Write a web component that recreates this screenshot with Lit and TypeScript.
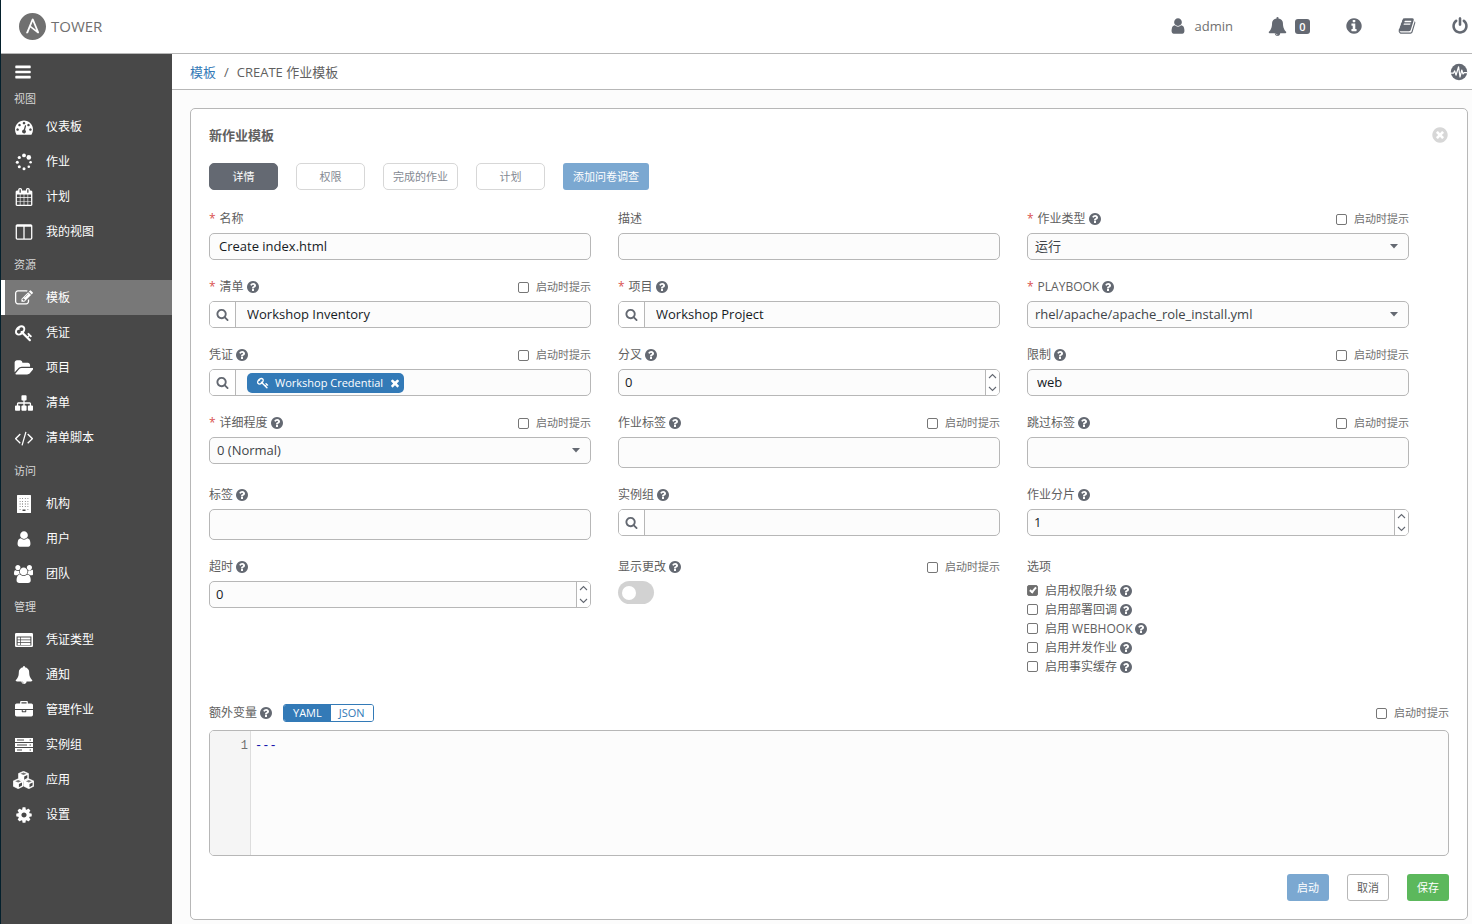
import { LitElement, html, css, svg, nothing, TemplateResult } from "lit";
import { customElement, state } from "lit/decorators.js";

const DISC =
  "q0 209-103 385.5t-279.5 279.5-385.5 103-385.5-103-279.5-279.5-103-385.5 103-385.5 279.5-279.5 385.5-103 385.5 103 279.5 279.5 103 385.5z";

/* Single-path glyphs: [view box width, path data]; the view box is 1792 high. */
const GLYPHS: Record<string, [number, string]> = {
  bars: [1792, "M1664 1344v128q0 26-19 45t-45 19h-1408q-26 0-45-19t-19-45v-128q0-26 19-45t45-19h1408q26 0 45 19t19 45zm0-512v128q0 26-19 45t-45 19h-1408q-26 0-45-19t-19-45v-128q0-26 19-45t45-19h1408q26 0 45 19t19 45zm0-512v128q0 26-19 45t-45 19h-1408q-26 0-45-19t-19-45v-128q0-26 19-45t45-19h1408q26 0 45 19t19 45z"],
  dashboard: [1792, "M384 1152q0-53-37.5-90.5t-90.5-37.5-90.5 37.5-37.5 90.5 37.5 90.5 90.5 37.5 90.5-37.5 37.5-90.5zm192-448q0-53-37.5-90.5t-90.5-37.5-90.5 37.5-37.5 90.5 37.5 90.5 90.5 37.5 90.5-37.5 37.5-90.5zm428 481l101-382q6-26-7.5-48.5t-38.5-29.5-48 6.5-30 39.5l-101 382q-60 5-107 43.5t-63 98.5q-20 77 20 146t117 89 146-20 89-117q16-60-6-117t-72-91zm660-33q0-53-37.5-90.5t-90.5-37.5-90.5 37.5-37.5 90.5 37.5 90.5 90.5 37.5 90.5-37.5 37.5-90.5zm-640-640q0-53-37.5-90.5t-90.5-37.5-90.5 37.5-37.5 90.5 37.5 90.5 90.5 37.5 90.5-37.5 37.5-90.5zm448 192q0-53-37.5-90.5t-90.5-37.5-90.5 37.5-37.5 90.5 37.5 90.5 90.5 37.5 90.5-37.5 37.5-90.5zm320 448q0 261-141 483-19 29-54 29h-1402q-35 0-54-29-141-221-141-483 0-182 71-348t191-286 286-191 348-71 348 71 286 191 191 286 71 348z"],
  calendar: [1792, "M192 1664h288v-288h-288v288zm352 0h320v-288h-320v288zm-352-352h288v-320h-288v320zm352 0h320v-320h-320v320zm-352-384h288v-288h-288v288zm736 736h320v-288h-320v288zm-384-736h320v-288h-320v288zm768 736h288v-288h-288v288zm-384-352h320v-320h-320v320zm-352-864v-288q0-13-9.5-22.5t-22.5-9.5h-64q-13 0-22.5 9.5t-9.5 22.5v288q0 13 9.5 22.5t22.5 9.5h64q13 0 22.5-9.5t9.5-22.5zm736 864h288v-320h-288v320zm-384-384h320v-288h-320v288zm384 0h288v-288h-288v288zm32-480v-288q0-13-9.5-22.5t-22.5-9.5h-64q-13 0-22.5 9.5t-9.5 22.5v288q0 13 9.5 22.5t22.5 9.5h64q13 0 22.5-9.5t9.5-22.5zm384-64v1280q0 52-38 90t-90 38h-1408q-52 0-90-38t-38-90v-1280q0-52 38-90t90-38h128v-96q0-66 47-113t113-47h64q66 0 113 47t47 113v96h384v-96q0-66 47-113t113-47h64q66 0 113 47t47 113v96h128q52 0 90 38t38 90z"],
  columns: [1792, "M224 1536h608v-1152h-640v1120q0 13 9.5 22.5t22.5 9.5zm1376-32v-1120h-640v1152h608q13 0 22.5-9.5t9.5-22.5zm128-1216v1216q0 66-47 113t-113 47h-1344q-66 0-113-47t-47-113v-1216q0-66 47-113t113-47h1344q66 0 113 47t47 113z"],
  edit: [1792, "M888 1184l116-116-152-152-116 116v56h96v96h56zm440-720q-16-16-33 1l-350 350q-17 17-1 33t33-1l350-350q17-17 1-33zm80 594v190q0 119-84.5 203.5t-203.5 84.5h-832q-119 0-203.5-84.5t-84.5-203.5v-832q0-119 84.5-203.5t203.5-84.5h832q63 0 117 25 15 7 18 23 3 17-9 29l-49 49q-14 14-32 8-23-6-45-6h-832q-66 0-113 47t-47 113v832q0 66 47 113t113 47h832q66 0 113-47t47-113v-126q0-13 9-22l64-64q15-15 35-7t20 29zm-96-738l288 288-672 672h-288v-288zm444 132l-92 92-288-288 92-92q28-28 68-28t68 28l152 152q28 28 28 68t-28 68z"],
  key: [1792, "M832 512q0-80-56-136t-136-56-136 56-56 136q0 42 19 83-41-19-83-19-80 0-136 56t-56 136 56 136 136 56 136-56 56-136q0-42-19-83 41 19 83 19 80 0 136-56t56-136zm851 704q0 17-49 66t-66 49q-9 0-28.5-16t-36.5-33-38.5-40-24.5-26l-96 96 220 220q28 28 28 68 0 42-39 81t-81 39q-40 0-68-28l-671-671q-176 131-365 131-163 0-265.5-102.5t-102.5-265.5q0-160 95-313t248-248 313-95q163 0 265.5 102.5t102.5 265.5q0 189-131 365l355 355 96-96q-3-3-26-24.5t-40-38.5-33-36.5-16-28.5q0-17 49-66t66-49q13 0 23 10 6 6 46 44.5t82 79.5 86.5 86 73 78 28.5 41z"],
  folder: [1943, "M1943 952q0 31-31 66l-336 396q-43 51-120.5 86.5t-143.5 35.5h-1088q-34 0-60.5-13t-26.5-43q0-31 31-66l336-396q43-51 120.5-86.5t143.5-35.5h1088q34 0 60.5 13t26.5 43zm-343-344v160h-832q-94 0-197 47.5t-164 119.5l-337 396-5 6q0-4-.5-12.5t-.5-12.5v-960q0-92 66-158t158-66h320q92 0 158 66t66 158v32h544q92 0 158 66t66 158z"],
  sitemap: [1792, "M1792 1248v320q0 40-28 68t-68 28h-320q-40 0-68-28t-28-68v-320q0-40 28-68t68-28h96v-192h-512v192h96q40 0 68 28t28 68v320q0 40-28 68t-68 28h-320q-40 0-68-28t-28-68v-320q0-40 28-68t68-28h96v-192h-512v192h96q40 0 68 28t28 68v320q0 40-28 68t-68 28h-320q-40 0-68-28t-28-68v-320q0-40 28-68t68-28h96v-192q0-52 38-90t90-38h512v-192h-96q-40 0-68-28t-28-68v-320q0-40 28-68t68-28h320q40 0 68 28t28 68v320q0 40-28 68t-68 28h-96v192h512q52 0 90 38t38 90v192h96q40 0 68 28t28 68z"],
  code: [1792, "M553 1399l-50 50q-10 10-23 10t-23-10l-466-466q-10-10-10-23t10-23l466-466q10-10 23-10t23 10l50 50q10 10 10 23t-10 23l-393 393 393 393q10 10 10 23t-10 23zm591-1067l-373 1291q-4 13-15.5 19.5t-23.5 2.5l-62-17q-13-4-19.5-15.5t-2.5-24.5l373-1291q4-13 15.5-19.5t23.5-2.5l62 17q13 4 19.5 15.5t2.5 24.5zm657 651l-466 466q-10 10-23 10t-23-10l-50-50q-10-10-10-23t10-23l393-393-393-393q-10-10-10-23t10-23l50-50q10-10 23-10t23 10l466 466q10 10 10 23t-10 23z"],
  user: [1792, "M1536 1399q0 109-62.5 187t-150.5 78h-854q-88 0-150.5-78t-62.5-187q0-85 8.5-160.5t31.5-152 58.5-131 94-89 134.5-34.5q131 128 313 128t313-128q76 0 134.5 34.5t94 89 58.5 131 31.5 152 8.5 160.5zm-256-887q0 159-112.5 271.5t-271.5 112.5-271.5-112.5-112.5-271.5 112.5-271.5 271.5-112.5 271.5 112.5 112.5 271.5z"],
  users: [1920, "M593 896q-162 5-265 128h-134q-82 0-138-40.5t-56-118.5q0-353 124-353 6 0 43.5 21t97.5 42.5 119 21.5q67 0 133-23-5 37-5 66 0 159 93 294zm1071 637q0 120-73 189.5t-194 69.5h-874q-121 0-194-69.5t-73-189.5q0-53 3.5-103.5t14-109 26.5-108.5 43-97.5 62-81 85.5-53.5 111.5-20q10 0 43 21.5t73 48 107 48 135 21.5 135-21.5 107-48 73-48 43-21.5q61 0 111.5 20t85.5 53.5 62 81 43 97.5 26.5 108.5 14 109 3.5 103.5zm-1024-1277q0 106-75 181t-181 75-181-75-75-181 75-181 181-75 181 75 75 181zm704 384q0 159-112.5 271.5t-271.5 112.5-271.5-112.5-112.5-271.5 112.5-271.5 271.5-112.5 271.5 112.5 112.5 271.5zm576 225q0 78-56 118.5t-138 40.5h-134q-103-123-265-128 93-135 93-294 0-29-5-66 66 23 133 23 59 0 119-21.5t97.5-42.5 43.5-21q124 0 124 353zm-128-609q0 106-75 181t-181 75-181-75-75-181 75-181 181-75 181 75 75 181z"],
  bell: [1792, "M912 1696q0-16-16-16-59 0-101.5-42.5t-42.5-101.5q0-16-16-16t-16 16q0 73 51.5 124.5t124.5 51.5q16 0 16-16zm816-288q0 52-38 90t-90 38h-448q0 106-75 181t-181 75-181-75-75-181h-448q-52 0-90-38t-38-90q50-42 91-88t85-119.5 74.5-158.5 50-206 19.5-260q0-152 117-282.5t307-158.5q-8-19-8-39 0-40 28-68t68-28 68 28 28 68q0 20-8 39 190 28 307 158.5t117 282.5q0 139 19.5 260t50 206 74.5 158.5 85 119.5 91 88z"],
  briefcase: [1792, "M640 256h512v-128h-512v128zm1152 640v480q0 66-47 113t-113 47h-1472q-66 0-113-47t-47-113v-480h672v160q0 26 19 45t45 19h320q26 0 45-19t19-45v-160h672zm-768 0v128h-256v-128h256zm768-480v384h-1792v-384q0-66 47-113t113-47h352v-160q0-40 28-68t68-28h576q40 0 68 28t28 68v160h352q66 0 113 47t47 113z"],
  cog: [1792, "M1152 896q0-106-75-181t-181-75-181 75-75 181 75 181 181 75 181-75 75-181zm512-109v222q0 12-8 23t-20 13l-185 28q-19 54-39 91 35 50 107 138 10 12 10 25t-9 23q-27 37-99 108t-94 71q-12 0-26-9l-138-108q-44 23-91 38-16 136-29 186-7 28-36 28h-222q-14 0-24.5-8.5t-11.5-21.5l-28-184q-49-16-90-37l-141 107q-10 9-25 9-14 0-25-11-126-114-165-168-7-10-7-23 0-12 8-23 15-21 51-66.5t54-70.5q-27-50-41-99l-183-27q-13-2-21-12.5t-8-23.5v-222q0-12 8-23t19-13l186-28q14-46 39-92-40-57-107-138-10-12-10-24 0-10 9-23 26-36 98.5-107.5t94.5-71.5q13 0 26 10l138 107q44-23 91-38 16-136 29-186 7-28 36-28h222q14 0 24.5 8.5t11.5 21.5l28 184q49 16 90 37l142-107q9-9 24-9 13 0 25 10 129 119 165 170 7 8 7 22 0 12-8 23-15 21-51 66.5t-54 70.5q26 50 41 98l183 28q13 2 21 12.5t8 23.5z"],
  info: [1792, "M1152 1376v-160q0-14-9-23t-23-9h-96v-512q0-14-9-23t-23-9h-320q-14 0-23 9t-9 23v160q0 14 9 23t23 9h96v320h-96q-14 0-23 9t-9 23v160q0 14 9 23t23 9h448q14 0 23-9t9-23zm-128-896v-160q0-14-9-23t-23-9h-192q-14 0-23 9t-9 23v160q0 14 9 23t23 9h192q14 0 23-9t9-23zm640 416" + DISC],
  question: [1792, "M1024 1376v-192q0-14-9-23t-23-9h-192q-14 0-23 9t-9 23v192q0 14 9 23t23 9h192q14 0 23-9t9-23zm256-672q0-88-55.5-163t-138.5-116-170-41q-243 0-371 213-15 24 8 42l132 100q7 6 19 6 16 0 25-12 53-68 86-92 34-24 86-24 48 0 85.5 26t37.5 59q0 38-20 61t-68 45q-63 28-115.5 86.5t-52.5 125.5v36q0 14 9 23t23 9h192q14 0 23-9t9-23q0-19 21.5-49.5t54.5-49.5q32-18 49-28.5t46-35 44.5-48 28-60.5 12.5-81zm384 192" + DISC],
  closeDisc: [1792, "M1277 1122q0-26-19-45l-181-181 181-181q19-19 19-45 0-27-19-46l-90-90q-19-18-46-18-26 0-45 18l-181 181-181-181q-19-18-45-18-27 0-46 18l-90 90q-19 19-19 46 0 26 19 45l181 181-181 181q-19 19-19 45 0 27 19 46l90 90q19 18 46 18 26 0 45-18l181-181 181 181q19 18 45 18 27 0 46-18l90-90q19-19 19-46zm387-226" + DISC],
  times: [1792, "M1490 1322q0 40-28 68l-136 136q-28 28-68 28t-68-28l-294-294-294 294q-28 28-68 28t-68-28l-136-136q-28-28-28-68t28-68l294-294-294-294q-28-28-28-68t28-68l136-136q28-28 68-28t68 28l294 294 294-294q28-28 68-28t68 28l136 136q28 28 28 68t-28 68l-294 294 294 294q28 28 28 68z"],
  book: [1792, "M1703 478q40 57 18 129l-275 906q-19 64-76.5 107.5t-122.5 43.5h-923q-77 0-148.5-53.5t-99.5-131.5q-24-67-2-127 0-4 3-27t4-37q1-8-3-21.5t-3-19.5q2-11 8-21t16.5-23.5 16.5-23.5q23-38 45-91.5t30-91.5q3-10 .5-30t-.5-28q3-11 17-28t17-23q21-36 42-92t25-90q1-9-2.5-32t.5-28q4-13 22-30.5t22-22.5q19-26 42.5-84.5t27.5-96.5q1-8-3-25.5t-2-26.5q2-8 9-18t18-23 17-21q8-12 16.5-30.5t15-35 16-36 19.5-32 26.5-23.5 36-11.5 47.5 5.5l-1 3q38-9 51-9h761q74 0 114 56t18 130l-274 906q-36 119-71.5 153.5t-128.5 34.5h-869q-27 0-38 15-11 16-1 43 24 70 144 70h923q29 0 56-15.5t35-41.5l300-987q7-22 5-57 38 15 59 43zm-1064 2q-4 13 2 22.5t20 9.5h608q13 0 25.5-9.5t16.5-22.5l21-64q4-13-2-22.5t-20-9.5h-608q-13 0-25.5 9.5t-16.5 22.5zm-83 256q-4 13 2 22.5t20 9.5h608q13 0 25.5-9.5t16.5-22.5l21-64q4-13-2-22.5t-20-9.5h-608q-13 0-25.5 9.5t-16.5 22.5z"],
  power: [1792, "M1664 896q0 156-61 298t-164 245-245 164-298 61-298-61-245-164-164-245-61-298q0-182 80.5-343t226.5-270q43-32 95.5-25t83.5 50q32 42 24.5 94.5t-49.5 84.5q-98 74-151.5 181t-53.5 228q0 104 40.5 198.5t109.5 163.5 163.5 109.5 198.5 40.5 198.5-40.5 163.5-109.5 109.5-163.5 40.5-198.5q0-121-53.5-228t-151.5-181q-42-32-49.5-84.5t24.5-94.5q31-43 84-50t95 25q146 109 226.5 270t80.5 343zm-640-768v640q0 52-38 90t-90 38-90-38-38-90v-640q0-52 38-90t90-38 90 38 38 90z"],
  search: [1792, "M1216 832q0-185-131.5-316.5t-316.5-131.5-316.5 131.5-131.5 316.5 131.5 316.5 316.5 131.5 316.5-131.5 131.5-316.5zm512 832q0 52-38 90t-90 38q-54 0-90-38l-343-342q-179 124-399 124-143 0-273.5-55.5t-225-150-150-225-55.5-273.5 55.5-273.5 150-225 225-150 273.5-55.5 273.5 55.5 225 150 150 225 55.5 273.5q0 220-124 399l343 343q37 37 37 90z"],
};

const cube = (x: number, y: number) => svg`
  <g transform="translate(${x} ${y})">
    <path d="M5.2 0 10.2 2.2V7.4L5.2 9.9 .2 7.4V2.2z" fill="currentColor" stroke="currentColor" stroke-width="0.6" stroke-linejoin="round"/>
    <path d="M5.2 1.2 8.2 2.5 5.2 3.8 2.2 2.5z" fill="#484848" opacity="0.75"/>
    <path d="M5.9 5.2 9 3.8V6.8L5.9 8.4z" fill="#484848"/>
  </g>`;

/* Glyphs built from several shapes: [width, height, content]. */
const DRAWN: Record<string, [number, number, TemplateResult]> = {
  spinner: [18, 18, svg`
    <circle cx="9" cy="2.4" r="1.9"/><circle cx="13.8" cy="4.4" r="2.3"/>
    <circle cx="15.6" cy="9.2" r="1.3"/><circle cx="13.8" cy="13.8" r="1.3"/>
    <circle cx="9" cy="15.8" r="1.5"/><circle cx="4.3" cy="13.8" r="1.5"/>
    <circle cx="2.3" cy="9.2" r="1.5"/><circle cx="4.3" cy="4.5" r="1.6"/>`],
  building: [18, 18, svg`
    <path fill-rule="evenodd" d="M2.6 0h12.8q.6 0 .6.6v16.8q0 .6-.6.6H2.6q-.6 0-.6-.6V.6q0-.6.6-.6z
      M7.5 14.4h3V16h-3z
      M4.7 3.2h.8v.8h-.8z M7.2 3.2h.8v.8h-.8z M9.9 3.2h.8v.8h-.8z M12.5 3.2h.8v.8h-.8z
      M4.7 5.9h.8v.8h-.8z M7.2 5.9h.8v.8h-.8z M9.9 5.9h.8v.8h-.8z M12.5 5.9h.8v.8h-.8z
      M4.7 8.6h.8v.8h-.8z M7.2 8.6h.8v.8h-.8z M9.9 8.6h.8v.8h-.8z M12.5 8.6h.8v.8h-.8z
      M4.7 11.3h.8v.8h-.8z M7.2 11.3h.8v.8h-.8z M9.9 11.3h.8v.8h-.8z M12.5 11.3h.8v.8h-.8z
      M4.7 14h.8v.8h-.8z M12.5 14h.8v.8h-.8z"/>`],
  listAlt: [18, 18, svg`
    <path fill-rule="evenodd" d="M1.2 2h15.6q1.2 0 1.2 1.2v11.6q0 1.2-1.2 1.2H1.2Q0 16 0 14.8V3.2Q0 2 1.2 2z
      M1.6 5.6v9h14.8v-9z"/>
    <path d="M2.6 6.5h2.4v2H2.6zM5.7 6.5h9.7v2H5.7zM2.6 9.2h2.4v2H2.6zM5.7 9.2h9.7v2H5.7zM2.6 11.9h2.4v2H2.6zM5.7 11.9h9.7v2H5.7z"/>`],
  server: [18, 18, svg`
    <path fill-rule="evenodd" d="M0 2h18v4H0z M2 3.6v.9h7v-.9z M14.6 3.4v1.2h1.4V3.4z
      M0 7h18v4H0z M2 8.6v.9h10v-.9z M14.6 8.4v1.2h1.4V8.4z
      M0 12h18v4H0z M2 13.6v.9h5v-.9z M14.6 13.4v1.2h1.4v-1.2z"/>`],
  cubes: [21, 18, svg`${cube(5.3, 0.3)}${cube(0, 7.8)}${cube(10.6, 7.8)}`],
  activity: [18, 18, svg`
    <circle cx="9" cy="9" r="8.2"/>
    <path d="M0.8 10.2H3.4L4.7 7.8 6 12.2 8.6 3.8 10 14 11.8 7 13 11 14.2 9.6H17.2" fill="none" stroke="#fff" stroke-width="1.2" stroke-linejoin="round"/>`],
  up: [9, 6, svg`<path d="M1 5 4.5 1.5 8 5" fill="none" stroke="currentColor" stroke-width="1.1"/>`],
  down: [9, 6, svg`<path d="M1 1 4.5 4.5 8 1" fill="none" stroke="currentColor" stroke-width="1.1"/>`],
};

function icon(name: string, size: number) {
  const drawn = DRAWN[name];
  if (drawn) {
    const [w, h, body] = drawn;
    return html`<svg class="icon" aria-hidden="true" width=${(size * w) / h} height=${size} viewBox="0 0 ${w} ${h}">${body}</svg>`;
  }
  const [w, d] = GLYPHS[name];
  return html`<svg class="icon" aria-hidden="true" width=${(size * w) / 1792} height=${size} viewBox="0 0 ${w} 1792">${svg`<path d=${d}></path>`}</svg>`;
}

const NAV = [
  { title: "视图", items: [["dashboard", "仪表板"], ["spinner", "作业"], ["calendar", "计划"], ["columns", "我的视图"]] },
  { title: "资源", items: [["edit", "模板"], ["key", "凭证"], ["folder", "项目"], ["sitemap", "清单"], ["code", "清单脚本"]] },
  { title: "访问", items: [["building", "机构"], ["user", "用户"], ["users", "团队"]] },
  { title: "管理", items: [["listAlt", "凭证类型"], ["bell", "通知"], ["briefcase", "管理作业"], ["server", "实例组"], ["cubes", "应用"], ["cog", "设置"]] },
];

interface Field {
  id: string;
  label: string;
  kind: "text" | "select" | "lookup" | "number" | "tags" | "toggle" | "credential";
  value?: string;
  required?: boolean;
  noHelp?: boolean;
  prompt?: boolean;
}

const FIELDS: Field[] = [
  { id: "name", label: "名称", kind: "text", value: "Create index.html", required: true, noHelp: true },
  { id: "description", label: "描述", kind: "text", value: "", noHelp: true },
  { id: "job-type", label: "作业类型", kind: "select", value: "运行", required: true, prompt: true },
  { id: "inventory", label: "清单", kind: "lookup", value: "Workshop Inventory", required: true, prompt: true },
  { id: "project", label: "项目", kind: "lookup", value: "Workshop Project", required: true },
  { id: "playbook", label: "PLAYBOOK", kind: "select", value: "rhel/apache/apache_role_install.yml", required: true },
  { id: "credential", label: "凭证", kind: "credential", value: "Workshop Credential", prompt: true },
  { id: "forks", label: "分叉", kind: "number", value: "0" },
  { id: "limit", label: "限制", kind: "text", value: "web", prompt: true },
  { id: "verbosity", label: "详细程度", kind: "select", value: "0 (Normal)", required: true, prompt: true },
  { id: "job-tags", label: "作业标签", kind: "tags", prompt: true },
  { id: "skip-tags", label: "跳过标签", kind: "tags", prompt: true },
  { id: "labels", label: "标签", kind: "tags" },
  { id: "instance-groups", label: "实例组", kind: "lookup", value: "" },
  { id: "slices", label: "作业分片", kind: "number", value: "1" },
  { id: "timeout", label: "超时", kind: "number", value: "0" },
  { id: "diff", label: "显示更改", kind: "toggle", prompt: true },
];

const OPTIONS = [
  { label: "启用权限升级", on: true },
  { label: "启用部署回调", on: false },
  { label: "启用 WEBHOOK", on: false },
  { label: "启用并发作业", on: false },
  { label: "启用事实缓存", on: false },
];

@customElement("app-root")
export class AppRoot extends LitElement {
  @state() private format = "YAML";

  static styles = css`
    :host {
      display: flex;
      flex-direction: column;
      min-height: 100vh;
      box-sizing: border-box;
      border-left: 1px solid #04202c;
      background: #fcfcfc;
      color: #606060;
      font: 12px/20px "Open Sans", "Noto Sans CJK SC", sans-serif;
    }
    *, *::before { box-sizing: border-box; }
    a { color: inherit; text-decoration: none; }
    button, input, select, textarea { font: inherit; color: inherit; margin: 0; }
    button { padding: 0; border: 0; background: none; cursor: pointer; }
    .icon { display: block; flex: none; fill: currentColor; }

    .topbar {
      display: flex;
      align-items: center;
      height: 54px;
      padding: 0 3px 1px 18px;
      border-bottom: 1px solid #b7b7b7;
      background: #fff;
      color: #646972;
    }
    .brand { display: flex; align-items: center; gap: 5px; margin-right: auto; color: #707070; font-size: 15px; }
    .tools { display: flex; align-items: center; gap: 35px; font-size: 13px; }
    .tool { display: flex; align-items: center; gap: 8px; color: #646972; }
    .who { color: #707070; }
    .badge {
      min-width: 15px;
      height: 15px;
      border-radius: 3px;
      background: #646972;
      color: #fff;
      font-size: 11px;
      font-weight: 600;
      line-height: 15px;
      text-align: center;
    }

    .body { display: flex; flex: 1; }
    .sidebar { flex: none; width: 171px; background: #484848; color: #fff; }
    .menu { display: flex; align-items: center; height: 35px; padding-left: 13px; color: #fff; }
    .heading { height: 31px; margin: 0; padding-left: 13px; color: #d7d7d7; font-size: 11px; font-weight: 400; line-height: 31px; }
    .menu + .section .heading { height: 20px; line-height: 20px; }
    .item { display: flex; align-items: center; height: 35px; padding-left: 9px; border-left: 4px solid transparent; }
    .item.current { border-left-color: #fff; background: #787878; }
    .item-icon { display: flex; justify-content: center; width: 19px; margin-right: 13px; }

    .main { flex: 1; min-width: 0; }
    .crumbs {
      display: flex;
      align-items: center;
      gap: 8px;
      height: 36px;
      padding: 0 4px 0 18px;
      border-bottom: 1px solid #b7b7b7;
      background: #fff;
      font-size: 13px;
    }
    .crumb-link { color: #337ab7; }
    .stream { margin-left: auto; color: #646972; }

    .panel {
      margin: 18px 4px 4px 18px;
      padding: 16px 18px 18px;
      border: 1px solid #b7b7b7;
      border-radius: 5px;
      background: #fff;
    }
    .panel-head { display: flex; align-items: center; justify-content: space-between; height: 20px; margin-bottom: 18px; }
    .title { margin: 0; font-size: 13px; font-weight: 700; }
    .close { color: #d7d7d7; }

    .tabs { display: flex; flex-wrap: wrap; gap: 18px; margin-bottom: 19px; }
    .tab {
      min-width: 69px;
      height: 27px;
      padding: 0 9px;
      border: 1px solid #d7d7d7;
      border-radius: 5px;
      background: #fff;
      color: #848992;
      font-size: 11px;
    }
    .tab.active { border-color: #646972; background: #646972; color: #fff; }
    .btn { height: 27px; padding: 0 10px; border-radius: 3px; color: #fff; font-size: 11px; }
    .btn.blue { background: #337ab7; }
    .btn.blue:disabled { background: #7ba8d1; }
    .btn.green { background: #5cb85c; }
    .btn.plain { padding: 0 9px; border: 1px solid #b7b7b7; background: #fff; color: #606060; }

    .grid { display: grid; grid-template-columns: repeat(3, minmax(0, 1fr)); gap: 17px 27px; padding-right: 40px; }
    .field-head { display: flex; align-items: center; height: 20px; margin-bottom: 4px; }
    .req { margin-right: 4px; color: #d9534f; }
    .help { margin-left: 2px; color: #646972; }
    .prompt { display: flex; align-items: center; gap: 7px; margin-left: auto; color: #707070; font-size: 11px; }

    .check {
      position: relative;
      flex: none;
      width: 11px;
      height: 11px;
      border: 1px solid #767676;
      border-radius: 2px;
      background: #fff;
      appearance: none;
    }
    .check:checked { background: #6e6e6e; }
    .check:checked::before {
      content: "";
      position: absolute;
      left: 3px;
      top: 0;
      width: 4px;
      height: 7px;
      border: solid #fff;
      border-width: 0 2px 2px 0;
      transform: rotate(40deg);
    }

    .control {
      display: flex;
      width: 100%;
      height: 27px;
      border: 1px solid #b7b7b7;
      border-radius: 5px;
      background: #fcfcfc;
      color: #161b1f;
      font-size: 13px;
      overflow: hidden;
    }
    .control.tall { height: 31px; }
    .entry { flex: 1; min-width: 0; padding: 0 9px 2px; border: 0; outline: 0; background: none; appearance: none; }
    .find { display: flex; align-items: center; justify-content: center; width: 26px; border-right: 1px solid #b7b7b7; background: #fff; color: #646972; }
    .lookup .entry { padding: 0 11px 2px; }
    .number .entry { padding: 0 6px 2px; }
    .control.pick { display: grid; color: #404449; }
    .pick .entry { grid-area: 1 / 1; padding: 0 7px 2px; }
    .caret { grid-area: 1 / 1; place-self: center end; margin-right: 10px; pointer-events: none; fill: #646972; }
    .steps { display: flex; flex-direction: column; width: 14px; border-left: 1px solid #b7b7b7; background: #fff; color: #646972; }
    .step { display: flex; flex: 1; align-items: center; justify-content: center; }
    .chips { display: flex; flex: 1; align-items: center; padding-left: 11px; }
    .chip {
      display: flex;
      align-items: center;
      height: 20px;
      padding: 0 3px 0 10px;
      border-radius: 5px;
      background: #337ab7;
      color: #fff;
      font-size: 11px;
    }
    .chip-text { margin: 0 6px; }

    .switch { display: block; width: 36px; height: 23px; padding: 5px 4px; border-radius: 12px; background: #d2d2d2; appearance: none; }
    .switch::before { content: ""; display: block; width: 14px; height: 14px; border-radius: 50%; background: #fff; }
    .switch:checked { padding-left: 18px; background: #337ab7; }

    .options { margin: 0; padding: 0; border: 0; min-width: 0; }
    .options-title { display: block; padding: 0; height: 20px; margin-bottom: 4px; }
    .option-row { display: flex; align-items: center; height: 19px; }
    .option { display: flex; align-items: center; gap: 7px; }

    .extra-head { display: flex; align-items: center; height: 20px; margin: 27px 0 7px; }
    .formats { display: flex; height: 18px; margin-left: 10px; border: 1px solid #337ab7; border-radius: 3px; overflow: hidden; }
    .format { padding: 0 8px; background: #fff; color: #337ab7; font-size: 11px; line-height: 16px; }
    .format.active { padding: 0 9px; background: #337ab7; color: #fff; }
    .editor {
      display: flex;
      height: 126px;
      border: 1px solid #b7b7b7;
      border-radius: 5px;
      background: #fcfcfc;
      font: 12px/20px "Liberation Mono", monospace;
      overflow: hidden;
    }
    .gutter { width: 41px; padding: 5px 2px; border-right: 1px solid #ddd; background: #f5f5f5; color: #707070; text-align: right; }
    .code { flex: 1; padding: 5px 4px; border: 0; outline: 0; background: none; color: #1111aa; resize: none; }

    .actions { display: flex; justify-content: flex-end; gap: 18px; margin-top: 18px; }
  `;

  private help(label: string) {
    return html`<button class="help" type="button" aria-label="${label} ?">${icon("question", 14)}</button>`;
  }

  private prompt() {
    return html`<label class="prompt"><input class="check" type="checkbox" />启动时提示</label>`;
  }

  private control(f: Field) {
    switch (f.kind) {
      case "text":
        return html`<div class="control"><input class="entry" id=${f.id} type="text" .value=${f.value ?? ""} /></div>`;
      case "tags":
        return html`<div class="control tall"><input class="entry" id=${f.id} type="text" /></div>`;
      case "lookup":
        return html`<div class="control lookup">
          <button class="find" type="button" aria-label=${f.label}>${icon("search", 13)}</button>
          <input class="entry" id=${f.id} type="text" .value=${f.value ?? ""} />
        </div>`;
      case "credential":
        return html`<div class="control lookup">
          <button class="find" id=${f.id} type="button">${icon("search", 13)}</button>
          <div class="chips">
            <span class="chip">${icon("key", 12)}<span class="chip-text">${f.value}</span>
              <button type="button" aria-label="×">${icon("times", 12)}</button>
            </span>
          </div>
        </div>`;
      case "select":
        return html`<div class="control pick">
          <select class="entry" id=${f.id}><option>${f.value}</option></select>
          <svg class="caret" aria-hidden="true" width="8" height="5" viewBox="0 0 8 5"><path d="M0 0h8L4 4.5z" /></svg>
        </div>`;
      case "number":
        return html`<div class="control number">
          <input class="entry" id=${f.id} type="text" inputmode="numeric" .value=${f.value ?? ""} />
          <div class="steps">
            <button class="step" type="button" aria-label="+">${icon("up", 6)}</button>
            <button class="step" type="button" aria-label="-">${icon("down", 6)}</button>
          </div>
        </div>`;
      case "toggle":
        return html`<input class="switch" id=${f.id} type="checkbox" role="switch" />`;
    }
  }

  private field(f: Field) {
    return html`<div class="field">
      <div class="field-head">
        ${f.required ? html`<span class="req">*</span>` : nothing}
        <label for=${f.id}>${f.label}</label>
        ${f.noHelp ? nothing : this.help(f.label)}
        ${f.prompt ? this.prompt() : nothing}
      </div>
      ${this.control(f)}
    </div>`;
  }

  render() {
    return html`
      <header class="topbar">
        <a class="brand" href="#">
          <svg class="icon" aria-hidden="true" width="27" height="27" viewBox="0 0 24 24">
            <path d="M10.617 11.473l4.686 3.695-3.102-7.662zM12 0C5.371 0 0 5.371 0 12s5.371 12 12 12 12-5.371 12-12S18.629 0 12 0zm5.797 17.305c-.011.471-.403.842-.875.83-.236 0-.416-.09-.664-.293l-6.19-5-2.079 5.203H6.191L11.438 5.44c.124-.314.427-.52.764-.506.326-.014.63.189.742.506l4.774 11.494c.045.111.08.234.08.348z" />
          </svg>
          TOWER
        </a>
        <nav class="tools">
          <a class="tool" href="#">${icon("user", 18)}<span class="who">admin</span></a>
          <a class="tool" href="#">${icon("bell", 19)}<span class="badge">0</span></a>
          <a class="tool" href="#" aria-label="info">${icon("info", 18)}</a>
          <a class="tool" href="#" aria-label="docs">${icon("book", 18)}</a>
          <a class="tool" href="#" aria-label="logout">${icon("power", 18)}</a>
        </nav>
      </header>
      <div class="body">
        <nav class="sidebar">
          <button class="menu" type="button" aria-label="menu">${icon("bars", 18)}</button>
          ${NAV.map(
            (s) => html`<div class="section">
              <h2 class="heading">${s.title}</h2>
              ${s.items.map(
                ([ic, label]) => html`<a class="item ${label === "模板" ? "current" : ""}" href="#">
                  <span class="item-icon">${icon(ic, 18)}</span>${label}</a>`
              )}
            </div>`
          )}
        </nav>
        <main class="main">
          <div class="crumbs">
            <a class="crumb-link" href="#">模板</a><span>/</span><span>CREATE 作业模板</span>
            <button class="stream" type="button" aria-label="activity">${icon("activity", 18)}</button>
          </div>
          <form class="panel" @submit=${(e: Event) => e.preventDefault()}>
            <div class="panel-head">
              <h1 class="title">新作业模板</h1>
              <button class="close" type="button" aria-label="close">${icon("closeDisc", 18)}</button>
            </div>
            <div class="tabs">
              <button class="tab active" type="button">详情</button>
              <button class="tab" type="button">权限</button>
              <button class="tab" type="button">完成的作业</button>
              <button class="tab" type="button">计划</button>
              <button class="btn blue" type="button" disabled>添加问卷调查</button>
            </div>
            <div class="grid">
              ${FIELDS.map((f) => this.field(f))}
              <fieldset class="options">
                <legend class="options-title">选项</legend>
                ${OPTIONS.map(
                  (o) => html`<div class="option-row">
                    <label class="option"><input class="check" type="checkbox" .checked=${o.on} />${o.label}</label>
                    ${this.help(o.label)}
                  </div>`
                )}
              </fieldset>
            </div>
            <div class="extra-head">
              <label for="extra-vars">额外变量</label>${this.help("额外变量")}
              <div class="formats">
                ${["YAML", "JSON"].map(
                  (f) => html`<button class="format ${this.format === f ? "active" : ""}" type="button"
                    @click=${() => (this.format = f)}>${f}</button>`
                )}
              </div>
              ${this.prompt()}
            </div>
            <div class="editor">
              <div class="gutter">1</div>
              <textarea class="code" id="extra-vars" spellcheck="false" .value=${"---"}></textarea>
            </div>
            <div class="actions">
              <button class="btn blue" type="button" disabled>启动</button>
              <button class="btn plain" type="button">取消</button>
              <button class="btn green" type="submit">保存</button>
            </div>
          </form>
        </main>
      </div>
    `;
  }
}
